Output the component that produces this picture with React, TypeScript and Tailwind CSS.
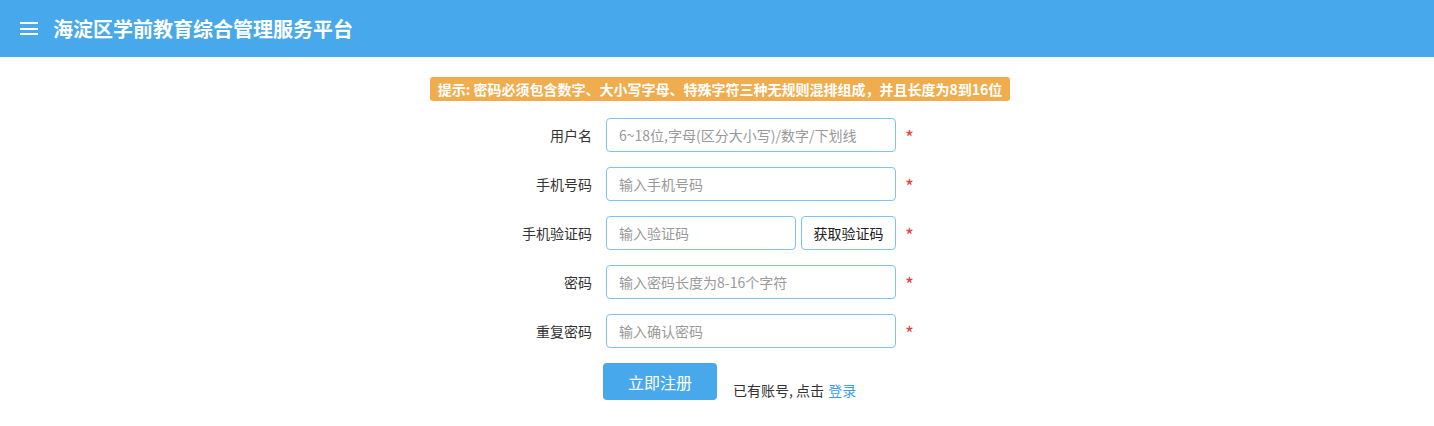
import React from "react";

const font = { fontFamily: '"Noto Sans CJK SC", "Noto Sans", sans-serif' };

function Row({ label, placeholder, children }: { label: string; placeholder?: string; children?: React.ReactNode }) {
  return (
    <div className="flex items-center h-[34px]">
      <div className="w-[179px] shrink-0 pr-[14px] text-right text-[14px] text-[#333]">{label}</div>
      {children ?? (
        <input
          className="w-[290px] h-[34px] rounded-[4px] border border-[#80c2f2] px-[12px] text-[14px] text-[#333] placeholder:text-[#999] outline-none"
          placeholder={placeholder}
          style={font}
        />
      )}
      <span className="ml-[9px] text-[19px] text-[#e8403a] leading-none mt-[3px]">*</span>
    </div>
  );
}

export default function App() {
  return (
    <div className="w-[1434px] h-[426px] bg-white" style={font}>
      <div className="h-[57px] bg-[#47a9eb] flex items-center pl-[20px]">
        <div className="flex flex-col gap-[3.5px] w-[18px]">
          <span className="block h-[2px] bg-white" />
          <span className="block h-[2px] bg-white" />
          <span className="block h-[2px] bg-white" />
        </div>
        <div className="ml-[15px] text-[20px] font-bold text-white">海淀区学前教育综合管理服务平台</div>
      </div>
      <div className="flex justify-center pt-[20px] pl-[6px]">
        <div className="w-[580px] h-[24px] rounded-[3px] bg-[#f0ad4e] text-white text-[14px] font-bold flex items-center justify-center whitespace-nowrap">
          提示: 密码必须包含数字、大小写字母、特殊字符三种无规则混排组成，并且长度为8到16位
        </div>
      </div>
      <div className="w-[580px] ml-[427px] mt-[17px] flex flex-col gap-[15px]">
        <Row label="用户名" placeholder="6~18位,字母(区分大小写)/数字/下划线" />
        <Row label="手机号码" placeholder="输入手机号码" />
        <Row label="手机验证码">
          <div className="flex w-[290px] gap-[5px]">
            <input
              className="w-[190px] h-[34px] rounded-[4px] border border-[#80c2f2] px-[12px] text-[14px] text-[#333] placeholder:text-[#999] outline-none"
              placeholder="输入验证码"
              style={font}
            />
            <button
              className="w-[95px] h-[34px] rounded-[4px] border border-[#80c2f2] bg-white text-[14px] text-[#222]"
              style={font}
            >
              获取验证码
            </button>
          </div>
        </Row>
        <Row label="密码" placeholder="输入密码长度为8-16个字符" />
        <Row label="重复密码" placeholder="输入确认密码" />
        <div className="flex items-start ml-[176px]">
          <button
            className="w-[114px] h-[37px] rounded-[4px] bg-[#47a9eb] text-white text-[16px]"
            style={font}
          >
            立即注册
          </button>
          <div className="ml-[16px] mt-[17px] text-[14px] text-[#333] whitespace-nowrap">
            已有账号, 点击 <span className="text-[#3a9de8] ml-[1px]">登录</span>
          </div>
        </div>
      </div>
    </div>
  );
}
